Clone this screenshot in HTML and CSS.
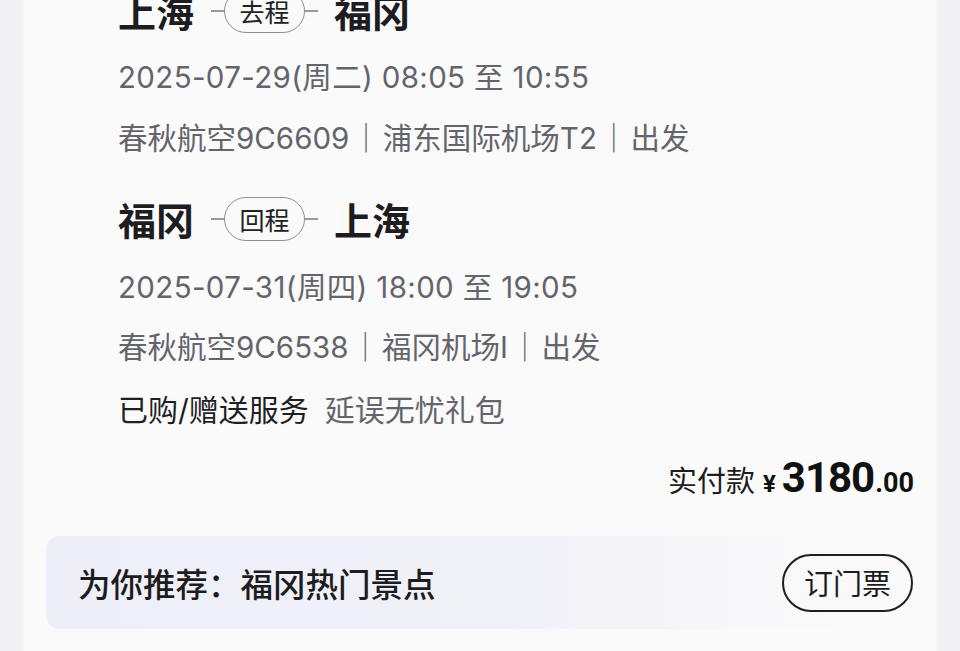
FILE: index.html
```html
<!DOCTYPE html>
<html lang="zh">
<head>
<meta charset="utf-8">
<link rel="stylesheet" href="styles.css">
</head>
<body>
<div class="card">
  <div class="flight">
    <div class="route">
      <span class="city">上海</span>
      <span class="dash dash-left"></span>
      <span class="tag">去程</span>
      <span class="dash dash-right"></span>
      <span class="city">福冈</span>
    </div>
    <div class="line date">2025-07-29(周二) 08:05 至 10:55</div>
    <div class="line info">春秋航空9C6609<span class="sep">｜</span>浦东国际机场T2<span class="sep">｜</span>出发</div>
  </div>
  <div class="flight second">
    <div class="route">
      <span class="city">福冈</span>
      <span class="dash dash-left"></span>
      <span class="tag">回程</span>
      <span class="dash dash-right"></span>
      <span class="city">上海</span>
    </div>
    <div class="line date">2025-07-31(周四) 18:00 至 19:05</div>
    <div class="line info">春秋航空9C6538<span class="sep">｜</span>福冈机场I<span class="sep">｜</span>出发</div>
  </div>
  <div class="line services"><span class="svc-label">已购/赠送服务</span><span class="svc-value">延误无忧礼包</span></div>
  <div class="price">
    <span class="price-label">实付款</span>
    <span class="yen">¥</span><span class="int">3180</span><span class="dec">.00</span>
  </div>
  <div class="recommend">
    <span class="rec-text">为你推荐：福冈热门景点</span>
    <span class="btn">订门票</span>
  </div>
</div>
</body>
</html>
```
FILE: styles.css
```css
* { box-sizing: border-box; }
html, body {
  margin: 0;
  padding: 0;
  background: #f1f1f3;
  height: 651px;
  overflow: hidden;
}
body {
  font-family: "Inter", "Noto Sans CJK SC", sans-serif;
  color: #1c1c21;
}
.card {
  margin: -11px 23px 0 23px;
  background: #fafafa;
  height: 700px;
  padding: 0 23px 0 95px;
}
.route {
  display: flex;
  align-items: center;
  height: 44px;
}
.city {
  font-family: "Noto Sans CJK SC", sans-serif;
  font-size: 38px;
  font-weight: 700;
  line-height: 44px;
  color: #1c1c21;
}
.dash {
  width: 13px;
  height: 1.5px;
  background: #9a9aa0;
}
.dash-left { margin-left: 17px; }
.dash-right { margin-right: 16px; }
.tag {
  font-family: "Noto Sans CJK SC", sans-serif;
  width: 81px;
  height: 44px;
  border: 1px solid #8e8e94;
  border-radius: 22px;
  font-size: 25px;
  line-height: 42px;
  text-align: center;
  color: #222;
}
.line {
  font-size: 29.5px;
  line-height: 40px;
  color: #64646c;
}
.date { margin-top: 24px; letter-spacing: 0.35px; }
.info { margin-top: 19px; }
.sep {
  font-family: "Noto Sans CJK SC", sans-serif;
  display: inline-block;
  margin: 0 2px;
  color: #64646c;
}
.second { margin-top: 39px; }
.second .date { margin-top: 26px; }
.second .info { margin-top: 18px; }
.services { margin-top: 23px; font-size: 30px; }
.svc-label { color: #1f1f24; }
.svc-value { margin-left: 16px; color: #64646c; }
.price {
  margin-top: 23px;
  display: flex;
  justify-content: flex-end;
  align-items: baseline;
  height: 48px;
  color: #111;
}
.price-label {
  font-family: "Noto Sans CJK SC", sans-serif;
  font-size: 29px;
  margin-right: 8px;
  color: #1c1c21;
}
.yen {
  font-family: "Roboto", sans-serif;
  font-weight: 700;
  font-size: 24px;
  margin-right: 6px;
}
.int {
  font-family: "Roboto", sans-serif;
  font-weight: 700;
  font-size: 42px;
  letter-spacing: -1px;
}
.dec {
  font-family: "Roboto", sans-serif;
  font-weight: 700;
  font-size: 27px;
  margin-left: 1px;
}
.recommend {
  margin: 35px 0 0 -72px;
  height: 93px;
  border-radius: 14px;
  background: linear-gradient(90deg, #eeeef8 0%, #f1f1f8 55%, #f8f8fa 80%, #fafafa 100%);
  display: flex;
  align-items: center;
  justify-content: space-between;
  padding: 0 0 0 32px;
}
.rec-text {
  font-family: "Noto Sans CJK SC", sans-serif;
  font-size: 32.5px;
  font-weight: 500;
  color: #1c1c21;
}
.btn {
  font-family: "Noto Sans CJK SC", sans-serif;
  width: 131px;
  height: 58px;
  border: 2.5px solid #1e1e24;
  border-radius: 29px;
  font-size: 29px;
  line-height: 53px;
  text-align: center;
  color: #1c1c21;
  margin-right: 1px;
}
```
